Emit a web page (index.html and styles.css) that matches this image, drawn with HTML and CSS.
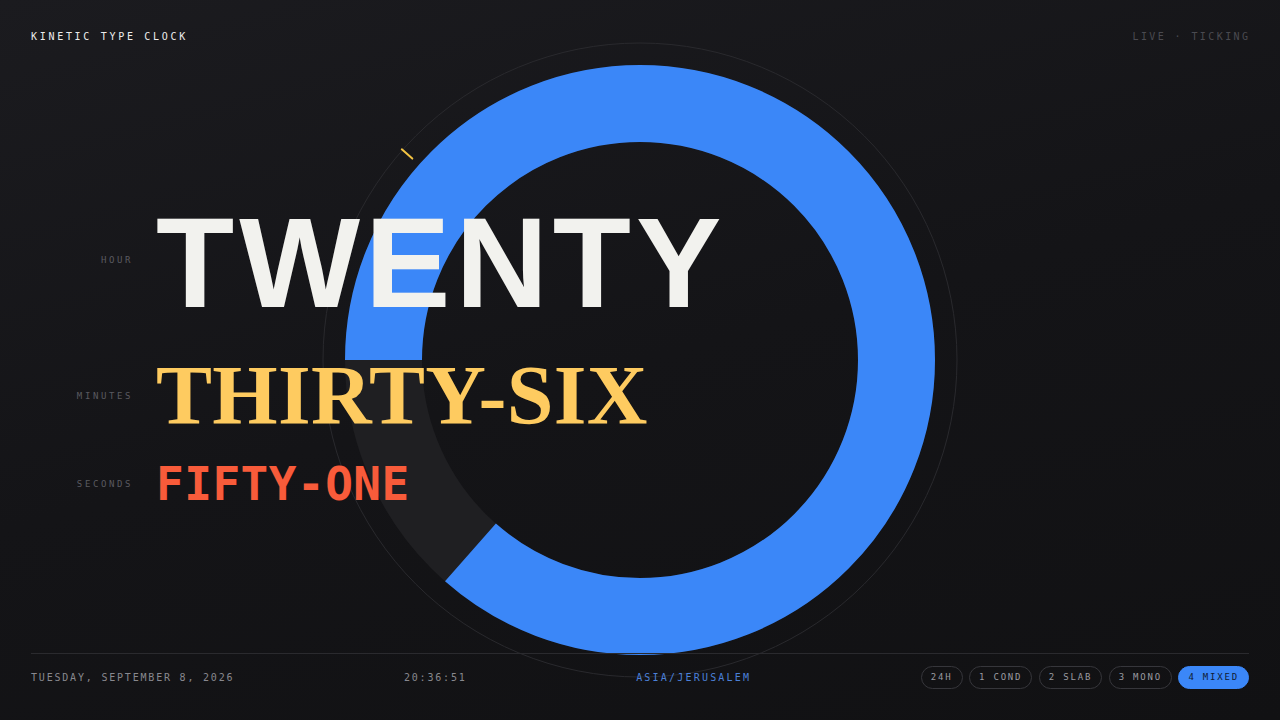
FILE: index.html
```html
<!DOCTYPE html>
<html lang="en">
<head>
<meta charset="utf-8">
<title>Kinetic Type Clock</title>
<link rel="stylesheet" href="styles.css">
</head>
<body>
<div class="page">
  <svg class="ring" viewBox="0 0 640 640" width="640" height="640" aria-hidden="true">
    <circle class="ring-outline" cx="320" cy="320" r="317"/>
    <circle class="ring-track" cx="320" cy="320" r="256.5"/>
    <circle class="ring-progress" cx="320" cy="320" r="256.5" stroke-dasharray="1393.4 1611.6" transform="rotate(180 320 320)"/>
    <line class="ring-tick" x1="92.3" y1="118.6" x2="81.8" y2="109.3"/>
  </svg>

  <header class="top">
    <div class="brand">KINETIC TYPE CLOCK</div>
    <div class="status">LIVE · TICKING</div>
  </header>

  <main class="stage">
    <div class="words">
      <div class="row row-hour">
        <div class="label">HOUR</div>
        <div class="word word-hour">TWENTY</div>
      </div>
      <div class="row row-min">
        <div class="label">MINUTES</div>
        <div class="word word-min">THIRTY-SIX</div>
      </div>
      <div class="row row-sec">
        <div class="label">SECONDS</div>
        <div class="word word-sec">FIFTY-ONE</div>
      </div>
    </div>
  </main>

  <footer class="bottom">
    <div class="date">TUESDAY, SEPTEMBER 8, 2026</div>
    <div class="time">20:36:51</div>
    <div class="zone">ASIA/JERUSALEM</div>
    <div class="modes">
      <button class="mode">24H</button>
      <button class="mode">1 COND</button>
      <button class="mode">2 SLAB</button>
      <button class="mode">3 MONO</button>
      <button class="mode active">4 MIXED</button>
    </div>
  </footer>
</div>
</body>
</html>
```

FILE: styles.css
```css
* { box-sizing: border-box; }

html, body {
  margin: 0;
  padding: 0;
  width: 1280px;
  height: 720px;
  overflow: hidden;
}

body {
  background: linear-gradient(165deg, #1b1b1f 0%, #141417 50%, #111113 100%);
  font-family: "DejaVu Sans Mono", "Liberation Mono", monospace;
  color: #e8e8e8;
}

.page {
  position: relative;
  width: 1280px;
  height: 720px;
  padding: 0 31px;
  display: flex;
  flex-direction: column;
}

.ring {
  position: absolute;
  left: 320px;
  top: 40px;
  z-index: 0;
}

.ring-outline {
  fill: none;
  stroke: #29292d;
  stroke-width: 1;
}

.ring-track {
  fill: none;
  stroke: #1f1f22;
  stroke-width: 77;
}

.ring-progress {
  fill: none;
  stroke: #3b87f8;
  stroke-width: 77;
}

.ring-tick {
  stroke: #f4c443;
  stroke-width: 2;
  stroke-linecap: round;
}

.top {
  position: relative;
  z-index: 1;
  display: flex;
  justify-content: space-between;
  align-items: center;
  padding-top: 31px;
  height: 42px;
  font-size: 10px;
  line-height: 11px;
}

.brand {
  color: #ececec;
  letter-spacing: 2.7px;
}

.status {
  color: #4a4a50;
  letter-spacing: 2.4px;
  margin-right: -1.4px;
}

.stage {
  position: relative;
  z-index: 1;
  flex: 1;
  display: flex;
  align-items: center;
  padding-top: 10px;
}

.words {
  display: flex;
  flex-direction: column;
}

.row {
  display: grid;
  grid-template-columns: 102px auto;
  column-gap: 23px;
  align-items: center;
}

.row-min { margin-top: 27px; }
.row-sec { margin-top: 23px; }

.label {
  text-align: right;
  font-size: 9px;
  line-height: 10px;
  letter-spacing: 2.6px;
  color: #5a5a60;
}

.row-hour .label { margin-bottom: 6px; }

.word {
  line-height: 1;
  white-space: nowrap;
}

.word-hour {
  font-family: "Liberation Sans", Arial, sans-serif;
  font-weight: 700;
  font-size: 128px;
  color: #f2f2ee;
  letter-spacing: 5px;
}

.word-min {
  font-family: "Liberation Serif", "Times New Roman", serif;
  font-weight: 700;
  font-size: 84px;
  color: #fecb60;
  letter-spacing: 0.3px;
}

.word-sec {
  font-family: "DejaVu Sans Mono", monospace;
  font-weight: 700;
  font-size: 46px;
  color: #f85b3a;
  letter-spacing: 0.5px;
}

.bottom {
  position: relative;
  z-index: 1;
  border-top: 1px solid #2a2a2e;
  padding: 12px 0 31px;
  display: flex;
  justify-content: space-between;
  align-items: center;
  font-size: 10px;
}

.date, .time {
  color: #88888e;
  letter-spacing: 1.8px;
  line-height: 23px;
}

.zone {
  color: #4b80d8;
  letter-spacing: 2.2px;
  line-height: 23px;
}

.modes {
  display: flex;
  gap: 6.5px;
}

.mode {
  height: 23px;
  padding: 0 9px;
  border: 1px solid #36363b;
  border-radius: 12px;
  background: transparent;
  color: #9a9aa0;
  font-family: "DejaVu Sans Mono", monospace;
  font-size: 9px;
  letter-spacing: 1.8px;
  line-height: 21px;
}

.mode.active {
  background: #3b87f8;
  border-color: #3b87f8;
  color: #0f1b33;
}
```
